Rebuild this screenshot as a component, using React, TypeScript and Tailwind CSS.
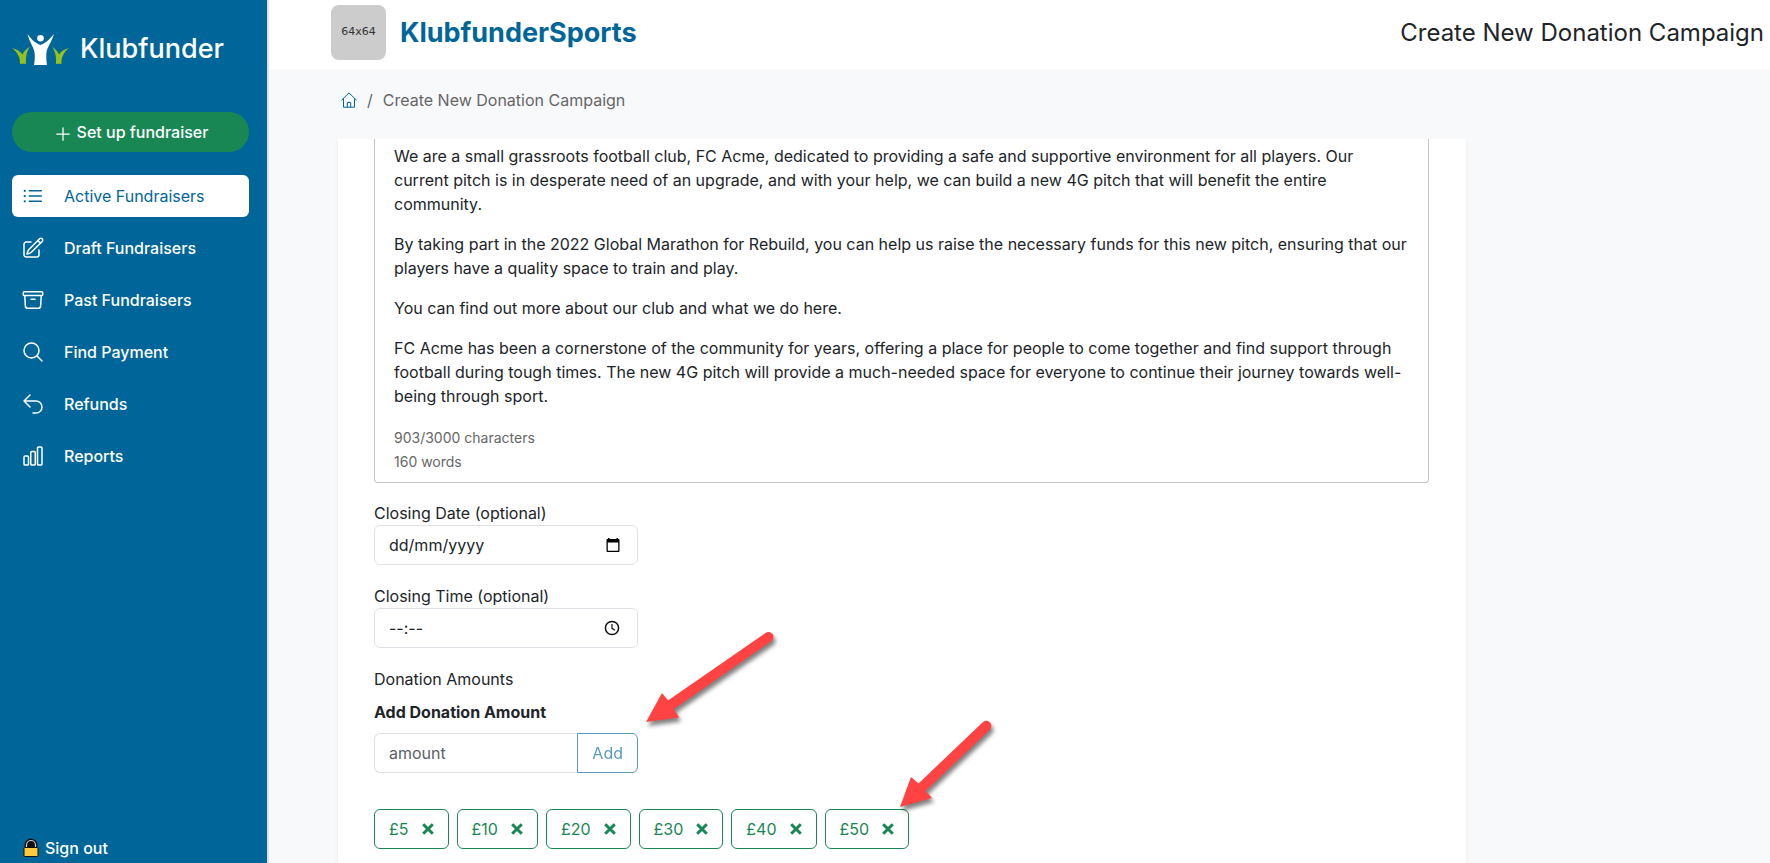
import { useState } from "react";
import type { ComponentType } from "react";
import {
  HiOutlineArchiveBox,
  HiOutlineArrowUturnLeft,
  HiOutlineChartBar,
  HiOutlineListBullet,
  HiOutlineMagnifyingGlass,
  HiOutlinePencilSquare,
  HiOutlinePlus,
} from "react-icons/hi2";

type NavItem = {
  label: string;
  icon: ComponentType<{ className?: string }>;
  active?: boolean;
};

const navItems: NavItem[] = [
  { label: "Active Fundraisers", icon: HiOutlineListBullet, active: true },
  { label: "Draft Fundraisers", icon: HiOutlinePencilSquare },
  { label: "Past Fundraisers", icon: HiOutlineArchiveBox },
  { label: "Find Payment", icon: HiOutlineMagnifyingGlass },
  { label: "Refunds", icon: HiOutlineArrowUturnLeft },
  { label: "Reports", icon: HiOutlineChartBar },
];

const story = [
  "We are a small grassroots football club, FC Acme, dedicated to providing a safe and supportive environment for all players. Our current pitch is in desperate need of an upgrade, and with your help, we can build a new 4G pitch that will benefit the entire community.",
  "By taking part in the 2022 Global Marathon for Rebuild, you can help us raise the necessary funds for this new pitch, ensuring that our players have a quality space to train and play.",
  "You can find out more about our club and what we do here.",
  "FC Acme has been a cornerstone of the community for years, offering a place for people to come together and find support through football during tough times. The new 4G pitch will provide a much-needed space for everyone to continue their journey towards well-being through sport.",
];

const LogoMark = () => (
  <svg viewBox="0 0 58 32" className="h-8 w-[58px]" aria-hidden="true">
    <circle cx="28.5" cy="5.2" r="3.3" fill="#fff" />
    <path
      d="M15.5 1C18 4 22 10 28.5 12C35 10 39 4 42 1C40 8 35.500 14 34.500 19C34 23 34.300 27 35 32H22C23 27 23 23 22.500 19C21.500 14 17 8 15.500 1Z"
      fill="#fff"
    />
    <path
      d="M0 15C4 16 8 18 10.500 21.500C12 18.500 14 16 18 13.500C15 18 13.500 23 14 31C12 30.500 10 30.500 8 31C8.500 24 5 19 0 15Z"
      fill="#95c11f"
    />
    <path
      d="M57 15C53 16 49 18 47 21.500C45.500 18.500 43.500 16 40 13.500C43 18 44.500 23 44 31C46 30.500 48 30.500 49.500 31C49 24 52 19 57 15Z"
      fill="#95c11f"
    />
  </svg>
);

const LockIcon = () => (
  <svg viewBox="0 0 16 20" className="h-5 w-4" aria-hidden="true">
    <path d="M1.500 9.500V7A6.500 6.500 0 0 1 14.500 7V9.500Z" fill="#111" />
    <path d="M3.500 10V7A4.500 4.500 0 0 1 12.500 7V10" fill="none" stroke="#c9ced2" strokeWidth="1.200" />
    <rect x="1" y="9.500" width="14" height="9" rx="1" fill="#ffc83d" stroke="#111" />
  </svg>
);

const HomeIcon = () => (
  <svg viewBox="0 0 16 16" className="size-4" fill="none" stroke="currentColor" strokeLinejoin="round" strokeLinecap="round" aria-hidden="true">
    <path d="M0.700 8L8 0.900L15.300 8M2.500 6.800V15.200H13.500V6.800M6.300 15V10.400H9.700V15" />
  </svg>
);

const CalendarIcon = () => (
  <svg viewBox="0 0 14 14" className="size-[14px]" fill="#000" aria-hidden="true">
    <path d="M2 0H3.500V1H10.500V0H12V1H12.500A1 1 0 0 1 13.500 2V13A1 1 0 0 1 12.500 14H1.500A1 1 0 0 1 0.500 13V2A1 1 0 0 1 1.500 1H2ZM1.800 4.500V12.700H12.200V4.500Z" />
  </svg>
);

const ClockIcon = () => (
  <svg viewBox="0 0 16 16" className="size-4" fill="none" stroke="#111" strokeWidth="1.500" aria-hidden="true">
    <circle cx="8" cy="8" r="6.600" />
    <path d="M8 4V8.300L11 10.200" strokeWidth="1.200" />
  </svg>
);

const CrossIcon = () => (
  <svg viewBox="0 0 12 12" className="size-3" stroke="currentColor" strokeWidth="3" aria-hidden="true">
    <path d="M1.200 1.200L10.800 10.800M10.800 1.200L1.200 10.800" />
  </svg>
);

const Sidebar = () => (
  <aside className="flex w-[269px] shrink-0 flex-col border-r-2 border-[#dee2e6] bg-[#006699] pl-3 pr-[18px] text-white">
    <a href="#" className="mt-7 flex items-center gap-[10px] text-[27px] leading-[42px] font-medium">
      <LogoMark />
      Klubfunder
    </a>
    <button
      type="button"
      className="mt-[42px] flex h-10 items-center justify-center gap-1 rounded-full bg-[#198754] font-medium"
    >
      <HiOutlinePlus className="mt-1 size-5" />
      Set up fundraiser
    </button>
    <nav className="mt-[23px] flex flex-col gap-[10px]">
      {navItems.map(({ label, icon: Icon, active }) => (
        <a
          key={label}
          href="#"
          className={
            active
              ? "flex h-[42px] items-center gap-[19px] rounded-md bg-white pl-[9px] text-[#006699]"
              : "flex h-[42px] items-center gap-[19px] rounded-md pl-[9px] font-medium"
          }
        >
          <Icon className="size-6" />
          {label}
        </a>
      ))}
    </nav>
    <a href="#" className="mt-auto mb-[3px] flex items-center gap-[6px] pl-[11px] font-medium">
      <LockIcon />
      Sign out
    </a>
  </aside>
);

const arrowClass = "pointer-events-none absolute z-10 drop-shadow-[2px_4px_2px_rgba(0,0,0,0.5)]";

export default function App() {
  const [amounts, setAmounts] = useState([5, 10, 20, 30, 40, 50]);
  const [amount, setAmount] = useState("");

  const addAmount = () => {
    setAmounts([...amounts, Number(amount)]);
    setAmount("");
  };

  return (
    <div className="flex h-screen overflow-hidden bg-[#f8f9fb] font-[Inter,sans-serif] text-base text-[#212529]">
      <Sidebar />

      <div className="flex min-w-0 flex-1 flex-col">
        <header className="flex items-center bg-white pt-[5px] pr-[6px] pb-[9px] pl-[62px]">
          <div className="flex size-[55px] items-center justify-center rounded-lg bg-[#cccccc] font-['DejaVu_Sans',sans-serif] text-[11px] text-[#333]">
            64x64
          </div>
          <h1 className="ml-[14px] text-[27px] leading-9 font-bold text-[#006699]">KlubfunderSports</h1>
          <h2 className="ml-auto text-2xl">Create New Donation Campaign</h2>
        </header>

        <nav aria-label="Breadcrumb" className="flex h-[70px] shrink-0 items-center pb-2 pl-[72px] text-[#666]">
          <a href="#" aria-label="Home" className="text-[#006699]">
            <HomeIcon />
          </a>
          <span className="px-[10px]">/</span>
          <span>Create New Donation Campaign</span>
        </nav>

        <main className="min-h-0 flex-1 overflow-hidden pl-[69px]">
          <form className="min-h-full max-w-[1128px] bg-white pr-[37px] pl-9 shadow-[0_2px_4px_rgba(0,0,0,0.075)]">
            <div className="rounded-b border border-t-0 border-[#c4c4c4] px-[19px] pt-[5px] pb-2">
              {story.map((text) => (
                <p key={text} className="mb-4">
                  {text}
                </p>
              ))}
              <div className="pt-0.5 text-sm leading-6 text-[#666]">
                <p>903/3000 characters</p>
                <p>160 words</p>
              </div>
            </div>

            <div className="mt-[18px] w-[264px]">
              <label htmlFor="closing-date">Closing Date (optional)</label>
              <div className="flex h-10 items-center rounded-md border border-[#dee2e6] pr-[17px] pl-[14px]">
                <input
                  id="closing-date"
                  placeholder="dd/mm/yyyy"
                  className="min-w-0 flex-1 outline-none placeholder:text-[#212529]"
                />
                <CalendarIcon />
              </div>
            </div>

            <div className="mt-[19px] w-[264px]">
              <label htmlFor="closing-time">Closing Time (optional)</label>
              <div className="flex h-10 items-center rounded-md border border-[#dee2e6] pr-[17px] pl-[14px]">
                <input
                  id="closing-time"
                  placeholder="--:--"
                  className="min-w-0 flex-1 outline-none placeholder:text-[#212529]"
                />
                <ClockIcon />
              </div>
            </div>

            <p className="mt-[19px]">Donation Amounts</p>
            <label htmlFor="amount" className="mt-[9px] block font-bold">
              Add Donation Amount
            </label>
            <div className="relative mt-[9px] flex h-10 w-[264px]">
              <input
                id="amount"
                placeholder="amount"
                value={amount}
                onChange={(e) => setAmount(e.target.value)}
                className="min-w-0 flex-1 rounded-l-md border border-r-0 border-[#dee2e6] pl-[14px] outline-none placeholder:text-[#5c6166]"
              />
              <button
                type="button"
                disabled={!amount}
                onClick={addAmount}
                className="rounded-r-md border border-[#006699] px-[14px] text-[#006699] disabled:opacity-65"
              >
                Add
              </button>
              <svg viewBox="0 0 140 110" className={`${arrowClass} bottom-9 left-full ml-[2px] h-[110px] w-[140px]`} aria-hidden="true">
                <path
                  d="M6 95L22 66L28 73.500L125.500 6A5 5 0 0 1 131.500 14L34 82L39 90.500Z"
                  fill="#ff4343"
                />
              </svg>
            </div>

            <ul className="mt-9 flex flex-wrap gap-2">
              {amounts.map((value, i) => (
                <li key={value} className="relative">
                  <button
                    type="button"
                    aria-label={`Remove £${value}`}
                    onClick={() => setAmounts(amounts.filter((a) => a !== value))}
                    className="flex h-10 items-center gap-[13px] rounded-md border border-[#198754] px-[14px] text-[#198754]"
                  >
                    £{value}
                    <CrossIcon />
                  </button>
                  {i === 5 && (
                    <svg viewBox="0 0 110 100" className={`${arrowClass} bottom-8 left-[68px] h-[100px] w-[110px]`} aria-hidden="true">
                      <path
                        d="M7 90L18 60L25.500 66.500L89.500 5.500A5 5 0 0 1 97 12.500L32.500 74L39 81Z"
                        fill="#ff4343"
                      />
                    </svg>
                  )}
                </li>
              ))}
            </ul>
          </form>
        </main>
      </div>
    </div>
  );
}
